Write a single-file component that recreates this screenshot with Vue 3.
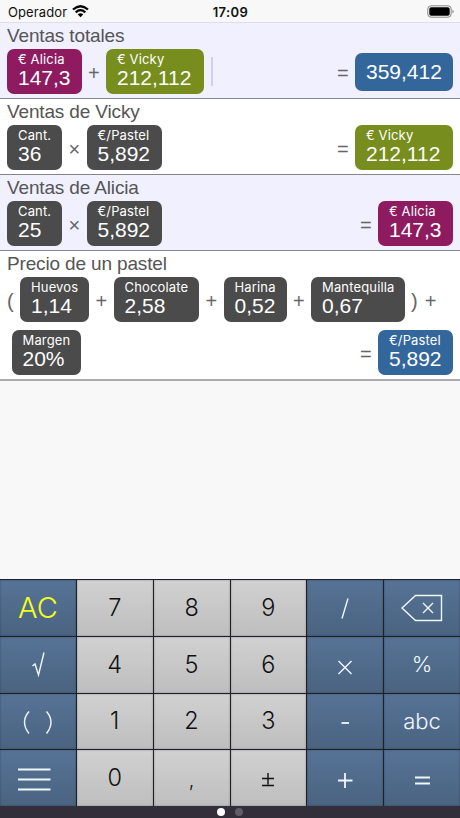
<script setup>
import { ref } from 'vue'

const lines = ref([
  {
    title: 'Ventas totales',
    active: true,
    rows: [
      {
        items: [
          { label: '€ Alicia', value: '147,3', color: 'purple', width: 74.5 },
          { op: '+' },
          { label: '€ Vicky', value: '212,112', color: 'green', width: 98 },
          { cursor: true },
        ],
        result: { value: '359,412', color: 'blue', width: 98 },
      },
    ],
  },
  {
    title: 'Ventas de Vicky',
    rows: [
      {
        items: [
          { label: 'Cant.', value: '36', width: 55 },
          { op: '×' },
          { label: '€/Pastel', value: '5,892', width: 75 },
        ],
        result: { label: '€ Vicky', value: '212,112', color: 'green', width: 98 },
      },
    ],
  },
  {
    title: 'Ventas de Alicia',
    active: true,
    rows: [
      {
        items: [
          { label: 'Cant.', value: '25', width: 55 },
          { op: '×' },
          { label: '€/Pastel', value: '5,892', width: 75 },
        ],
        result: { label: '€ Alicia', value: '147,3', color: 'purple', width: 75 },
      },
    ],
  },
  {
    title: 'Precio de un pastel',
    rows: [
      {
        items: [
          { op: '(', paren: true },
          { label: 'Huevos', value: '1,14', width: 69 },
          { op: '+' },
          { label: 'Chocolate', value: '2,58', width: 85.5 },
          { op: '+' },
          { label: 'Harina', value: '0,52', width: 63 },
          { op: '+' },
          { label: 'Mantequilla', value: '0,67', width: 94 },
          { op: ')', paren: true, close: true },
          { op: '+', last: true },
        ],
      },
      {
        indent: true,
        items: [{ label: 'Margen', value: '20%', width: 69.5 }],
        result: { label: '€/Pastel', value: '5,892', color: 'blue', width: 75 },
      },
    ],
  },
])

const keys = [
  { text: 'AC', type: 'clear' },
  { text: '7' },
  { text: '8' },
  { text: '9' },
  { icon: 'divide', type: 'fn' },
  { icon: 'delete', type: 'fn' },
  { icon: 'root', type: 'fn' },
  { text: '4' },
  { text: '5' },
  { text: '6' },
  { icon: 'times', type: 'fn' },
  { text: '%', type: 'fn' },
  { icon: 'parens', type: 'fn' },
  { text: '1' },
  { text: '2' },
  { text: '3' },
  { icon: 'minus', type: 'fn' },
  { text: 'abc', type: 'fn' },
  { icon: 'menu', type: 'fn' },
  { text: '0' },
  { text: ',', type: 'comma' },
  { icon: 'sign' },
  { icon: 'plus', type: 'fn' },
  { icon: 'equals', type: 'fn' },
]

// strokes on a 76x56 key
const icons = {
  divide: 'M35 38.500L41 18.500',
  delete: 'M18 28L31.500 15.500H57.500V40.500H31.500ZM39 23L49 33M49 23L39 33',
  root: 'M32.500 29L35 27L38.500 38L44 15.500',
  times: 'M31.500 24L44.500 37M44.500 24L31.500 37',
  parens: 'M29 18.500Q20 29 29 40.500M46.500 18.500Q55.500 29 46.500 40.500',
  minus: 'M34.500 30H42',
  menu: 'M18 19.500H50.500M18 29.500H50.500M18 39.500H50.500',
  sign: 'M32 28.500H44M38 23V34.500M32 35.500H44',
  plus: 'M31 30.500H45.500M38 23V38',
  equals: 'M31 27.500H46M31 33.500H46',
}
</script>

<template>
  <div class="app">
    <header class="status">
      <span class="carrier">Operador</span>
      <svg class="wifi" width="17" height="13" viewBox="0 0 17 13">
        <path d="M1 4.500Q8.500 -2 16 4.500M3.700 7.300Q8.500 3 13.300 7.300" fill="none" stroke="#000" stroke-width="2.300" />
        <path d="M5.700 9.300Q8.500 7 11.300 9.300L8.500 12.300Z" />
      </svg>
      <span class="time">17:09</span>
      <svg class="battery" width="28" height="13" viewBox="0 0 28 13">
        <rect x=".8" y=".8" width="23.400" height="11.400" rx="3.200" fill="none" stroke="#888" />
        <rect x="2.300" y="2.300" width="20.400" height="8.400" rx="1.800" />
        <path d="M25.500 4.500Q28 6.500 25.500 8.500Z" fill="#888" />
      </svg>
    </header>

    <main>
      <section v-for="line in lines" :key="line.title" class="line" :class="{ active: line.active }">
        <h2>{{ line.title }}</h2>
        <div v-for="(row, r) in line.rows" :key="r" class="row" :class="{ indent: row.indent }">
          <template v-for="(item, i) in row.items" :key="i">
            <span v-if="item.cursor" class="cursor"></span>
            <span v-else-if="item.op" class="op" :class="{ paren: item.paren, close: item.close, last: item.last }">{{ item.op }}</span>
            <div v-else class="chip" :class="item.color" :style="{ width: item.width + 'px' }">
              <small>{{ item.label }}</small>
              <b>{{ item.value }}</b>
            </div>
          </template>
          <template v-if="row.result">
            <span class="op result">=</span>
            <div class="chip" :class="[row.result.color, { single: !row.result.label }]" :style="{ width: row.result.width + 'px' }">
              <small v-if="row.result.label">{{ row.result.label }}</small>
              <b>{{ row.result.value }}</b>
            </div>
          </template>
        </div>
      </section>
    </main>

    <div class="keypad">
      <button v-for="(key, i) in keys" :key="i" :class="key.type">
        <svg v-if="key.icon" width="76" height="56" viewBox="0 0 76 56" :class="key.icon">
          <path :d="icons[key.icon]" />
        </svg>
        <span v-else>{{ key.text }}</span>
      </button>
    </div>
    <footer class="pager">
      <i class="on"></i>
      <i></i>
    </footer>
  </div>
</template>

<style>
body {
  margin: 0;
}
</style>

<style scoped>
.app {
  display: flex;
  flex-direction: column;
  width: 460px;
  height: 818px;
  overflow: hidden;
  background: #f8f8f8;
  font-family: 'Liberation Sans', Arial, sans-serif;
}
.status {
  display: grid;
  grid-template-columns: 64px 1fr auto 1fr 64px;
  align-items: center;
  box-sizing: border-box;
  height: 23px;
  padding: 1px 5px 0 8px;
  border-bottom: 1px solid #dedee4;
  font: 13px Inter, sans-serif;
  color: #111;
}
.carrier {
  letter-spacing: 0.1px;
}
.time {
  margin-left: -2px;
  font-weight: 600;
  letter-spacing: 0.4px;
}
.battery {
  grid-column: 5;
  justify-self: end;
}
main {
  flex: 1;
}
.line {
  box-sizing: border-box;
  padding: 2px 7px 4px;
  border-bottom: 1px solid #85858c;
  background: #fff;
}
.line.active {
  background: #f0f0ff;
}
.line:last-child {
  border-bottom: 2px solid #acacb0;
}
h2 {
  margin: 0;
  height: 24px;
  font-size: 19px;
  font-weight: normal;
  line-height: 22px;
  letter-spacing: -0.15px;
  color: #555;
}
.row {
  display: flex;
  align-items: center;
  height: 45px;
}
.row.indent {
  margin-top: 8px;
  padding-left: 4.500px;
}
.chip {
  flex: none;
  box-sizing: border-box;
  height: 45px;
  padding: 3px 0 0 11px;
  border-radius: 7px;
  background: #4b4b4b;
  color: #fff;
  white-space: nowrap;
}
.chip.single {
  height: 38px;
  padding-top: 8px;
}
.chip small {
  display: block;
  height: 15px;
  font: 13px/15px Inter, sans-serif;
  letter-spacing: 0.15px;
}
.chip b {
  display: block;
  font-size: 21px;
  font-weight: normal;
  line-height: 21px;
}
.purple {
  background: #8e1b60;
}
.green {
  background: #778d1d;
}
.blue {
  background: #33669a;
}
.op {
  width: 24.500px;
  padding-top: 2px;
  font-size: 20px;
  line-height: 22px;
  text-align: center;
  color: #666;
}
.op.paren {
  width: 13px;
  text-align: left;
}
.op.close {
  padding-left: 6px;
}
.op.last {
  width: 13px;
}
.op.result {
  margin-left: auto;
}
.cursor {
  width: 2px;
  height: 29px;
  margin-left: 7px;
  background: #cfcfff;
}
.keypad {
  display: grid;
  grid-template-columns: repeat(6, 1fr);
  grid-template-rows: repeat(4, 1fr);
  gap: 1px;
  box-sizing: border-box;
  height: 227px;
  padding-top: 1px;
  background: #202027;
}
button {
  display: flex;
  align-items: center;
  justify-content: center;
  min-width: 0;
  min-height: 0;
  padding: 0;
  border: 0;
  background: linear-gradient(#d1d1d1, #bebebe);
  box-shadow: inset 0 0 1.500px #666;
  font: 300 23.500px Inter, sans-serif;
  color: #111;
}
button span {
  margin-top: -1px;
}
button.fn,
button.clear {
  background: linear-gradient(#567396, #4a6380);
  box-shadow: inset 0 0 1.500px #24364c;
  color: #f0f8ff;
}
button.fn {
  font-size: 22px;
}
button.clear {
  font-size: 29px;
  color: #f5ff1e;
}
button.comma {
  padding-top: 5px;
  font-size: 20px;
}
button svg {
  flex: none;
  fill: none;
  stroke: currentColor;
  stroke-width: 1.400;
}
button svg.menu,
button svg.minus,
button svg.plus,
button svg.equals {
  stroke-width: 1.800;
}
.pager {
  display: flex;
  align-items: center;
  justify-content: center;
  gap: 10px;
  height: 12px;
  background: #322f3b;
}
.pager i {
  width: 8px;
  height: 8px;
  border-radius: 50%;
  background: #605d68;
}
.pager i.on {
  background: #fff;
}
</style>
